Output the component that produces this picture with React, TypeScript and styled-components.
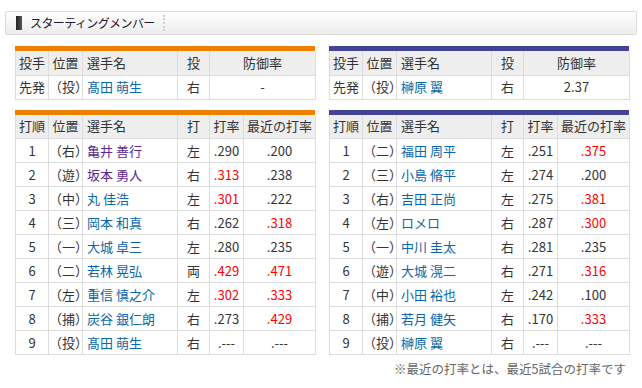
import styled, { createGlobalStyle } from 'styled-components';

const GlobalStyle = createGlobalStyle`
  body {
    margin: 0;
    background: #ffffff;
    font-family: "Noto Sans CJK JP", "Noto Sans", sans-serif;
    font-size: 13px;
    color: #333333;
  }
`;

type Batter = {
  order: number;
  pos: string;
  name: string;
  hand: string;
  avg: string;
  recent: string;
  avgHot?: boolean;
  recentHot?: boolean;
  visited?: boolean;
};

type Team = {
  color: string;
  pitcher: { name: string; hand: string; era: string };
  batters: Batter[];
};

const teams: Team[] = [
  {
    color: '#ee8000',
    pitcher: { name: '髙田 萌生', hand: '右', era: '-' },
    batters: [
      { order: 1, pos: '右', name: '亀井 善行', hand: '左', avg: '.290', recent: '.200', visited: true },
      { order: 2, pos: '遊', name: '坂本 勇人', hand: '右', avg: '.313', recent: '.238', avgHot: true, visited: true },
      { order: 3, pos: '中', name: '丸 佳浩', hand: '左', avg: '.301', recent: '.222', avgHot: true },
      { order: 4, pos: '三', name: '岡本 和真', hand: '右', avg: '.262', recent: '.318', recentHot: true },
      { order: 5, pos: '一', name: '大城 卓三', hand: '左', avg: '.280', recent: '.235' },
      { order: 6, pos: '二', name: '若林 晃弘', hand: '両', avg: '.429', recent: '.471', avgHot: true, recentHot: true },
      { order: 7, pos: '左', name: '重信 慎之介', hand: '左', avg: '.302', recent: '.333', avgHot: true, recentHot: true },
      { order: 8, pos: '捕', name: '炭谷 銀仁朗', hand: '右', avg: '.273', recent: '.429', recentHot: true },
      { order: 9, pos: '投', name: '髙田 萌生', hand: '右', avg: '.---', recent: '.---' },
    ],
  },
  {
    color: '#43439a',
    pitcher: { name: '榊原 翼', hand: '右', era: '2.37' },
    batters: [
      { order: 1, pos: '二', name: '福田 周平', hand: '左', avg: '.251', recent: '.375', recentHot: true },
      { order: 2, pos: '三', name: '小島 脩平', hand: '左', avg: '.274', recent: '.200' },
      { order: 3, pos: '右', name: '吉田 正尚', hand: '左', avg: '.275', recent: '.381', recentHot: true },
      { order: 4, pos: '左', name: 'ロメロ', hand: '右', avg: '.287', recent: '.300', recentHot: true },
      { order: 5, pos: '一', name: '中川 圭太', hand: '右', avg: '.281', recent: '.235' },
      { order: 6, pos: '遊', name: '大城 滉二', hand: '右', avg: '.271', recent: '.316', recentHot: true },
      { order: 7, pos: '中', name: '小田 裕也', hand: '左', avg: '.242', recent: '.100' },
      { order: 8, pos: '捕', name: '若月 健矢', hand: '右', avg: '.170', recent: '.333', recentHot: true },
      { order: 9, pos: '投', name: '榊原 翼', hand: '右', avg: '.---', recent: '.---' },
    ],
  },
];

export default function App() {
  return (
    <Page>
      <GlobalStyle />
      <TitleBar>
        <Marker />
        <Title>スターティングメンバー</Title>
        <Dots />
      </TitleBar>
      <Columns>
        {teams.map((team, i) => (
          <TeamColumn key={i}>
            <ColorBar $color={team.color} />
            <Table>
              <colgroup>
                <col style={{ width: 33 }} />
                <col style={{ width: 34 }} />
                <col style={{ width: 95 }} />
                <col style={{ width: 32 }} />
                <col style={{ width: 106 }} />
              </colgroup>
              <thead>
                <tr>
                  <Th>投手</Th>
                  <Th>位置</Th>
                  <Th $left>選手名</Th>
                  <Th>投</Th>
                  <Th>防御率</Th>
                </tr>
              </thead>
              <tbody>
                <tr>
                  <Td>先発</Td>
                  <Td>（投）</Td>
                  <NameCell>{team.pitcher.name}</NameCell>
                  <Td>{team.pitcher.hand}</Td>
                  <Td>{team.pitcher.era}</Td>
                </tr>
              </tbody>
            </Table>

            <ColorBar $color={team.color} $gap />
            <Table>
              <colgroup>
                <col style={{ width: 33 }} />
                <col style={{ width: 34 }} />
                <col style={{ width: 95 }} />
                <col style={{ width: 32 }} />
                <col style={{ width: 34 }} />
                <col style={{ width: 72 }} />
              </colgroup>
              <thead>
                <tr>
                  <Th>打順</Th>
                  <Th>位置</Th>
                  <Th $left>選手名</Th>
                  <Th>打</Th>
                  <Th>打率</Th>
                  <Th>最近の打率</Th>
                </tr>
              </thead>
              <tbody>
                {team.batters.map((b) => (
                  <tr key={b.order}>
                    <Td>{b.order}</Td>
                    <Td>（{b.pos}）</Td>
                    <NameCell $visited={b.visited}>{b.name}</NameCell>
                    <Td>{b.hand}</Td>
                    <Td $hot={b.avgHot}>{b.avg}</Td>
                    <Td $hot={b.recentHot}>{b.recent}</Td>
                  </tr>
                ))}
              </tbody>
            </Table>
            {i === 1 && <Note>※最近の打率とは、最近5試合の打率です</Note>}
          </TeamColumn>
        ))}
      </Columns>
    </Page>
  );
}

const Page = styled.div`
  width: 642px;
  padding: 11px 5px 0;
  box-sizing: border-box;
`;

const TitleBar = styled.div`
  display: flex;
  align-items: center;
  height: 24px;
  box-sizing: border-box;
  border: 1px solid #dcdcdc;
  border-radius: 2px;
  background: linear-gradient(#ffffff, #ececec);
  padding-left: 10px;
`;

const Marker = styled.span`
  width: 6px;
  height: 14px;
  background: linear-gradient(90deg, #222222, #555555);
  margin-right: 8px;
`;

const Title = styled.span`
  font-size: 12px;
  letter-spacing: -0.6px;
  color: #1a1a2e;
  line-height: 14px;
`;

const Dots = styled.span`
  width: 2px;
  height: 16px;
  margin-left: 8px;
  border-left: 2px dotted #d0d0d0;
`;

const Columns = styled.div`
  display: grid;
  grid-template-columns: 300px 300px;
  column-gap: 14px;
  padding: 11px 0 0 10px;
`;

const TeamColumn = styled.div`
  display: flex;
  flex-direction: column;
`;

const ColorBar = styled.div<{ $color: string; $gap?: boolean }>`
  height: 5px;
  background: ${(p) => p.$color};
  margin-top: ${(p) => (p.$gap ? '10px' : '0')};
`;

const Table = styled.table`
  width: 300px;
  border-collapse: collapse;
  table-layout: fixed;
  font-size: 13px;

  tr {
    height: 24px;
  }
`;

const Th = styled.th<{ $left?: boolean }>`
  background: #eeeeee;
  border: 1px solid #dddddd;
  border-top: none;
  font-weight: normal;
  color: #333333;
  text-align: ${(p) => (p.$left ? 'left' : 'center')};
  padding: 0 ${(p) => (p.$left ? '4px' : '0')};
  white-space: nowrap;
  line-height: 22px;
`;

const Td = styled.td<{ $hot?: boolean }>`
  border: 1px solid #dddddd;
  text-align: center;
  padding: 0;
  color: ${(p) => (p.$hot ? '#ff0000' : '#333333')};
  white-space: nowrap;
  line-height: 22px;
`;

const NameCell = styled.td<{ $visited?: boolean }>`
  border: 1px solid #dddddd;
  text-align: left;
  padding: 0 4px;
  color: ${(p) => (p.$visited ? '#5b2a8c' : '#0a68a8')};
  white-space: nowrap;
  line-height: 22px;
`;

const Note = styled.div`
  text-align: right;
  color: #666666;
  font-size: 12.5px;
  margin-top: 4px;
  padding-right: 3px;
`;
